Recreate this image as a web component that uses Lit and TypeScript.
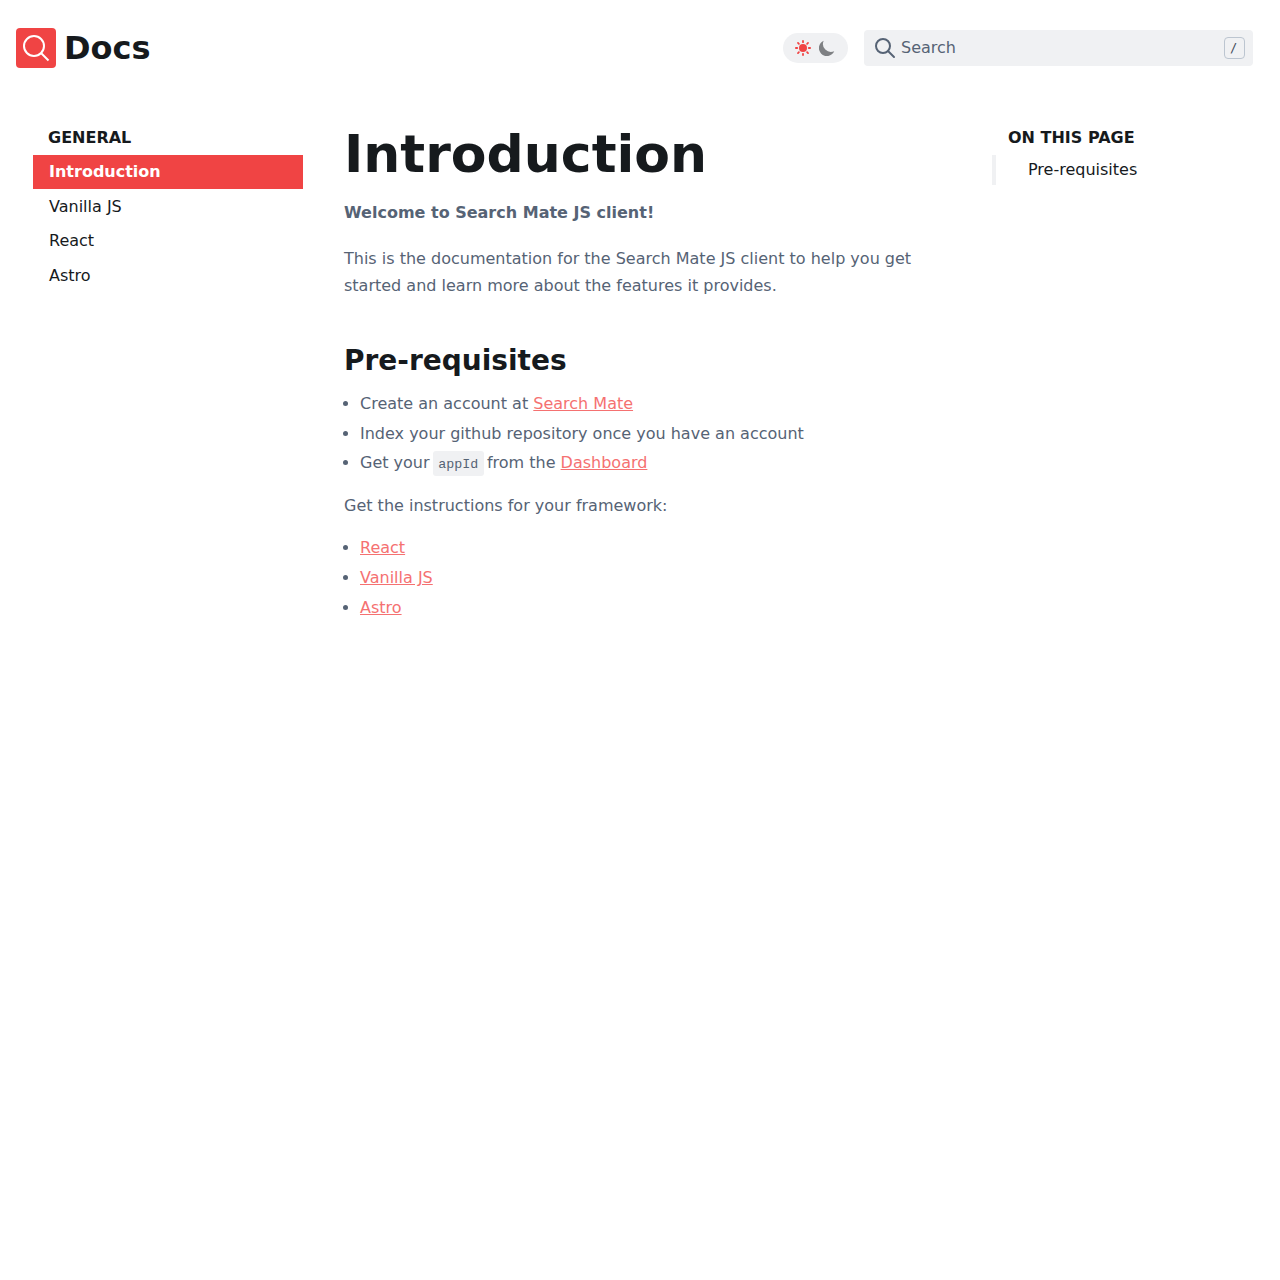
import { LitElement, html, css, svg } from "lit";
import { customElement } from "lit/decorators.js";

const NAV = ["Introduction", "Vanilla JS", "React", "Astro"];
const FRAMEWORKS = ["React", "Vanilla JS", "Astro"];
const RAYS = [0, 45, 90, 135, 180, 225, 270, 315];

@customElement("app-root")
export class AppRoot extends LitElement {
  static styles = css`
    :host {
      display: block;
      min-height: 1280px;
      background: #fff;
      color: #161a1d;
      font: 16px/1.5 "DejaVu Sans", sans-serif;
    }
    * { box-sizing: border-box; }
    svg { display: block; flex: none; }
    h1, h2, p, ul { margin: 0; padding: 0; }
    .header {
      display: flex;
      align-items: center;
      height: 96px;
      padding: 0 27px 0 16px;
    }
    .brand {
      display: flex;
      align-items: center;
      gap: 8px;
      flex: 1;
      font-size: 32px;
      line-height: 40px;
      font-weight: 700;
    }
    .toggle {
      display: flex;
      align-items: center;
      gap: 8px;
      width: 65px;
      height: 30px;
      padding-left: 12px;
      margin-right: 16px;
      border-radius: 15px;
      background: #f0f1f3;
    }
    .search {
      display: flex;
      align-items: center;
      width: 389px;
      height: 36px;
      padding: 0 8px 0 10px;
      border-radius: 4px;
      background: #f0f1f3;
      color: #566375;
    }
    .label { flex: 1; margin-left: 5px; }
    .key {
      display: flex;
      align-items: center;
      justify-content: center;
      width: 21px;
      height: 22px;
      padding-right: 2px;
      border: 1px solid #bcc5d0;
      border-radius: 4px;
      color: #3d4858;
      font: 12px/1 "DejaVu Sans Mono", monospace;
    }
    .page {
      display: grid;
      grid-template-columns: 270px 607px 260px;
      column-gap: 41px;
      padding: 29px 0 0 33px;
      align-items: start;
    }
    .heading {
      font-weight: 700;
      line-height: 26px;
      padding-left: 15px;
      height: 30px;
    }
    .nav a {
      display: block;
      height: 34.5px;
      line-height: 34px;
      padding-left: 16px;
    }
    .nav a.active {
      background: #f04444;
      color: #fff;
      font-weight: 700;
      height: 34px;
      margin-bottom: 0.6px;
    }
    .article { color: #566375; line-height: 27.2px; }
    .title {
      color: #161a1d;
      font-size: 52px;
      line-height: 58px;
      font-weight: 700;
    }
    .lead { font-weight: 700; margin-top: 16px; }
    .intro { margin-top: 19px; }
    .subtitle {
      color: #161a1d;
      font-size: 28px;
      line-height: 36px;
      font-weight: 700;
      margin-top: 43px;
    }
    .list { padding-left: 16px; margin-top: 11.2px; }
    .list li { height: 29.7px; }
    .steps li:first-child { height: 30.3px; }
    .steps li:nth-child(2) { height: 29.1px; }
    .next { margin-top: 13px; }
    .next + .list { margin-top: 15.1px; }
    .article a { color: #f57171; text-decoration: underline; }
    .code {
      font: 13.33px/1 "Liberation Mono", monospace;
      background: #f0f1f3;
      border-radius: 3px;
      padding: 5.8px 5.28px 3.8px;
      margin: 0 -1.7px;
    }
    .toc .heading { padding-left: 16px; }
    .toc a {
      display: block;
      height: 30px;
      line-height: 29px;
      border-left: 4px solid #f0f1f3;
      padding-left: 32px;
    }
  `;

  render() {
    return html`
      <header class="header">
        <div class="brand">
          <svg width="40" height="40" viewBox="0 0 40 40" fill="none" stroke="#fff" stroke-width="2">
            <rect width="40" height="40" rx="4" fill="#f04444" stroke="none" />
            <circle cx="18" cy="18" r="10" />
            <path d="M25 25l7.5 7.5" />
          </svg>
          <span>Docs</span>
        </div>
        <div class="toggle">
          <svg width="16" height="16" viewBox="0 0 16 16" stroke="#f04444" stroke-width="1.8" stroke-linecap="round">
            <circle cx="8" cy="8" r="4" fill="#f04444" stroke="none" />
            ${RAYS.map((a) => svg`<path d="M8 .9v1.3" transform=${`rotate(${a} 8 8)`} />`)}
          </svg>
          <svg width="16" height="16" viewBox="0 0 16 16" fill="#7e8083">
            <path d="M15.2 11.3A8 8 0 1 1 4.7 .7a8 8 0 0 0 10.5 10.6z" />
          </svg>
        </div>
        <div class="search">
          <svg width="22" height="22" viewBox="0 0 22 22" fill="none" stroke="#566375" stroke-width="2" stroke-linecap="round">
            <circle cx="9" cy="9" r="7" />
            <path d="M14 14l6 6" />
          </svg>
          <span class="label">Search</span>
          <span class="key">/</span>
        </div>
      </header>
      <div class="page">
        <nav class="nav">
          <div class="heading">GENERAL</div>
          ${NAV.map((n, i) => html`<a class=${i === 0 ? "active" : ""}>${n}</a>`)}
        </nav>
        <main class="article">
          <h1 class="title">Introduction</h1>
          <p class="lead">Welcome to Search Mate JS client!</p>
          <p class="intro">This is the documentation for the Search Mate JS client to help you get started and learn more about the features it provides.</p>
          <h2 class="subtitle">Pre-requisites</h2>
          <ul class="list steps">
            <li>Create an account at <a>Search Mate</a></li>
            <li>Index your github repository once you have an account</li>
            <li>Get your <code class="code">appId</code> from the <a>Dashboard</a></li>
          </ul>
          <p class="next">Get the instructions for your framework:</p>
          <ul class="list">
            ${FRAMEWORKS.map((f) => html`<li><a>${f}</a></li>`)}
          </ul>
        </main>
        <aside class="toc">
          <div class="heading">ON THIS PAGE</div>
          <a>Pre-requisites</a>
        </aside>
      </div>
    `;
  }
}
